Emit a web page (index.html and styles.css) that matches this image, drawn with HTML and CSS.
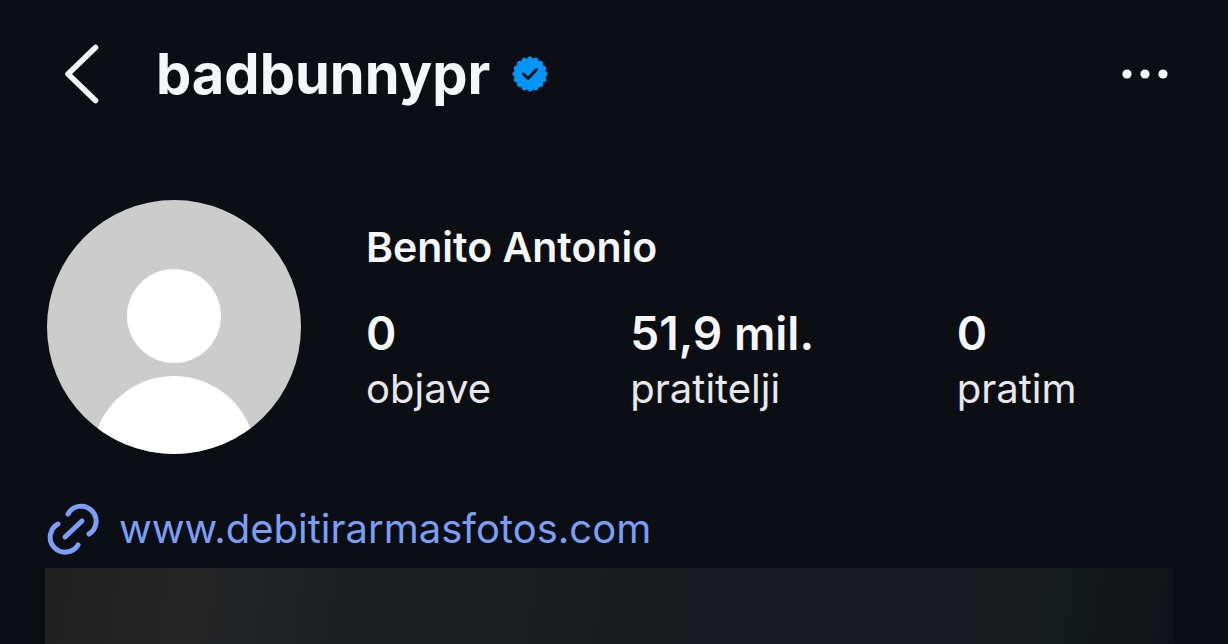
FILE: index.html
```html
<!DOCTYPE html>
<html lang="hr">
<head>
<meta charset="utf-8">
<meta name="viewport" content="width=device-width, initial-scale=1">
<title>badbunnypr</title>
<link rel="stylesheet" href="styles.css">
</head>
<body>
<header class="topbar">
  <button class="icon-button" type="button" aria-label="Natrag">
    <svg width="36" height="60" viewBox="0 0 36 60" fill="none" stroke="currentColor" stroke-width="5.6" stroke-linecap="round" stroke-linejoin="round"><path d="M31.500 3.500 4 30 31.500 56.500"/></svg>
  </button>
  <h1 class="username">badbunnypr</h1>
  <svg class="badge" width="36" height="36" viewBox="-18 -18 36 36" aria-hidden="true">
    <g fill="#0095f6">
      <rect x="-13" y="-13" width="26" height="26" rx="2"/>
      <rect x="-13" y="-13" width="26" height="26" rx="2" transform="rotate(22.5)"/>
      <rect x="-13" y="-13" width="26" height="26" rx="2" transform="rotate(45)"/>
      <rect x="-13" y="-13" width="26" height="26" rx="2" transform="rotate(67.5)"/>
    </g>
    <path d="M-6.500 0-2 4.500 6.500-4.500" fill="none" stroke="#0b0f14" stroke-width="2.800" stroke-linecap="round" stroke-linejoin="round"/>
  </svg>
  <button class="icon-button more" type="button" aria-label="Više opcija">
    <svg width="46" height="12" viewBox="0 0 46 12" fill="currentColor"><circle cx="5" cy="6" r="4.600"/><circle cx="23" cy="6" r="4.600"/><circle cx="41" cy="6" r="4.600"/></svg>
  </button>
</header>
<main class="profile">
  <section class="summary">
    <svg class="avatar" viewBox="0 0 256 256" role="img" aria-label="Profilna slika">
      <clipPath id="avatar-shape"><circle cx="128" cy="128" r="127"/></clipPath>
      <g clip-path="url(#avatar-shape)">
        <rect width="256" height="256" fill="#ccc"/>
        <circle cx="128" cy="117" r="47" fill="#fff"/>
        <circle cx="128" cy="259" r="82" fill="#fff"/>
      </g>
    </svg>
    <div class="details">
      <h2 class="name">Benito Antonio</h2>
      <dl class="stats">
        <div class="stat"><dt class="label">objave</dt><dd class="count">0</dd></div>
        <div class="stat"><dt class="label">pratitelji</dt><dd class="count">51,9 mil.</dd></div>
        <div class="stat"><dt class="label">pratim</dt><dd class="count">0</dd></div>
      </dl>
    </div>
  </section>
  <a class="website" href="#">
    <svg width="52" height="52" viewBox="0 0 52 52" fill="none" stroke="currentColor" stroke-width="5" stroke-linecap="round" aria-hidden="true">
      <path d="M21 11A15 15 0 1 1 42 31"/>
      <path d="M11 21A15 15 0 1 0 31 42"/>
      <path d="M18 34 35 18"/>
    </svg>
    <span>www.debitirarmasfotos.com</span>
  </a>
  <div class="preview"></div>
</main>
</body>
</html>
```
FILE: styles.css
```css
* {
  box-sizing: border-box;
}

body {
  display: flex;
  flex-direction: column;
  min-height: 100vh;
  margin: 0;
  background: #0b0f14;
  color: #f5f6f8;
  font-family: Inter, "Liberation Sans", sans-serif;
}

.topbar {
  display: flex;
  align-items: center;
  padding: 38px 60px 0 64px;
}

.icon-button {
  display: flex;
  padding: 0;
  border: 0;
  background: none;
  color: inherit;
  cursor: pointer;
}

.more {
  margin-left: auto;
}

.username {
  margin: 0 22px 0 56px;
  font-size: 56px;
  font-weight: 700;
  line-height: 72px;
}

.profile {
  display: flex;
  flex: 1;
  flex-direction: column;
  padding: 89px 54px 0 45px;
}

.summary {
  display: flex;
  gap: 64px;
}

.avatar {
  flex: none;
  width: 256px;
  height: 256px;
  margin-left: 1px;
}

.details {
  flex: 1;
  padding-top: 24px;
}

.name {
  margin: 0;
  font-size: 41px;
  font-weight: 600;
  line-height: 48px;
}

.stats {
  display: grid;
  grid-template-columns: 264fr 326fr 217fr;
  margin: 34px 0 0;
}

.stat {
  display: flex;
  flex-direction: column-reverse;
}

.count {
  margin: 0;
  font-size: 46px;
  font-weight: 600;
  line-height: 56px;
}

.label {
  color: #e6e8eb;
  font-size: 40px;
  line-height: 56px;
}

.website {
  display: flex;
  align-items: center;
  align-self: flex-start;
  gap: 20px;
  margin: 48px 0 13px 2px;
  color: #7c9df8;
  font-size: 40px;
  line-height: 52px;
  text-decoration: none;
}

.preview {
  flex: 1;
  min-height: 76px;
  background: linear-gradient(100deg, #202021, #252526 13%, #1b1f21 29%, #1b1f21 42%, #171a1e 60%, #171a1e 80%, #151a1c 90%, #101317);
}
```
